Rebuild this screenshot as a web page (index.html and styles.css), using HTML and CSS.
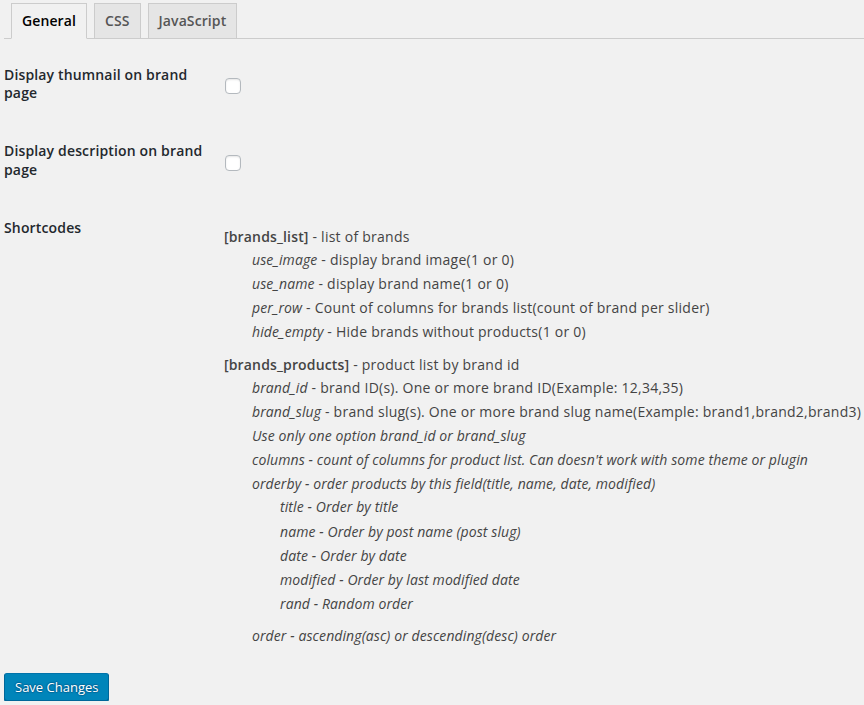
FILE: index.html
```html
<!DOCTYPE html>
<html>
<head>
<meta charset="utf-8">
<link rel="stylesheet" href="styles.css">
</head>
<body>
<div class="wrap">
  <div class="nav-tabs">
    <a class="nav-tab active">General</a>
    <a class="nav-tab">CSS</a>
    <a class="nav-tab">JavaScript</a>
  </div>
  <div class="form-table">
    <div class="row">
      <div class="th">Display thumnail on brand page</div>
      <div class="td td-check"><span class="checkbox"></span></div>
    </div>
    <div class="row">
      <div class="th">Display description on brand page</div>
      <div class="td td-check"><span class="checkbox"></span></div>
    </div>
    <div class="row">
      <div class="th">Shortcodes</div>
      <div class="td td-codes">
        <ul class="codes">
          <li class="group">
            <div class="line"><b>[brands_list]</b> - list of brands</div>
            <ul class="sub">
              <li><i>use_image</i> - display brand image(1 or 0)</li>
              <li><i>use_name</i> - display brand name(1 or 0)</li>
              <li><i>per_row</i> - Count of columns for brands list(count of brand per slider)</li>
              <li><i>hide_empty</i> - Hide brands without products(1 or 0)</li>
            </ul>
          </li>
          <li class="group">
            <div class="line"><b>[brands_products]</b> - product list by brand id</div>
            <ul class="sub">
              <li><i>brand_id</i> - brand ID(s). One or more brand ID(Example: 12,34,35)</li>
              <li><i>brand_slug</i> - brand slug(s). One or more brand slug name(Example: brand1,brand2,brand3)</li>
              <li><i>Use only one option brand_id or brand_slug</i></li>
              <li><i>columns - count of columns for product list. Can doesn't work with some theme or plugin</i></li>
              <li class="has-sub"><i>orderby - order products by this field(title, name, date, modified)</i>
                <ul class="sub sub2">
                  <li><i>title - Order by title</i></li>
                  <li><i>name - Order by post name (post slug)</i></li>
                  <li><i>date - Order by date</i></li>
                  <li><i>modified - Order by last modified date</i></li>
                  <li><i>rand - Random order</i></li>
                </ul>
              </li>
              <li><i>order - ascending(asc) or descending(desc) order</i></li>
            </ul>
          </li>
        </ul>
      </div>
    </div>
  </div>
  <div class="submit">
    <button class="button-primary" type="button">Save Changes</button>
  </div>
</div>
</body>
</html>
```
FILE: styles.css
```css
html, body {
  margin: 0;
  padding: 0;
  background: #f1f1f1;
}
body {
  font-family: "Open Sans", "Liberation Sans", sans-serif;
  font-size: 14px;
  color: #444;
  letter-spacing: 0.25px;
  overflow: hidden;
}
i {
  letter-spacing: 0.1px;
}
.wrap {
  padding: 3px 0 0 4px;
}
.nav-tabs {
  display: flex;
  border-bottom: 1px solid #ccc;
  height: 35px;
}
.nav-tab {
  margin-left: 7px;
  padding: 5px 10px;
  border: 1px solid #ccc;
  border-bottom: none;
  background: #e5e5e5;
  color: #555;
  font-size: 14px;
  font-weight: 600;
  line-height: 24px;
  letter-spacing: 0.1px;
  text-decoration: none;
  box-sizing: border-box;
  height: 35px;
}
.nav-tab.active {
  background: #f1f1f1;
  color: #000;
  border-bottom: 1px solid #f1f1f1;
  height: 36px;
}
.form-table {
  margin-top: 7px;
}
.row {
  display: flex;
}
.th {
  width: 200px;
  padding: 20px 10px 20px 0;
  line-height: 1.3;
  font-weight: 600;
  letter-spacing: 0.15px;
  color: #23282d;
  flex: none;
}
.td {
  padding: 15px 10px;
  line-height: 1.3;
}
.td-check {
  display: flex;
  align-items: center;
  padding-top: 19px;
}
.checkbox {
  display: block;
  width: 16px;
  height: 16px;
  box-sizing: border-box;
  border: 1px solid #b4b9be;
  border-radius: 4px;
  background: #fff;
  box-shadow: inset 0 1px 2px rgba(0,0,0,0.1);
  margin-left: 1px;
}
.codes, .sub {
  list-style: none;
  margin: 0;
  padding: 0;
}
.codes {
  margin-top: 11px;
  white-space: nowrap;
}
.group {
  margin-bottom: 8px;
}
.line {
  line-height: 24px;
}
.sub {
  padding-left: 28px;
}
.group > .sub {
  margin-top: -1px;
}
.sub li {
  line-height: 24.2px;
}
.group b {
  font-weight: 600;
  letter-spacing: 0.15px;
}
.sub2 li {
  line-height: 24.2px;
}
.has-sub > i {
  display: block;
  line-height: 24px;
}
.group > .sub.sub2,
.sub2 {
  margin-top: -1px;
  margin-bottom: 8px;
}
.submit {
  margin-top: 1px;
}
.button-primary {
  font-family: "Open Sans", "Liberation Sans", sans-serif;
  font-size: 13px;
  line-height: 26px;
  height: 28px;
  padding: 0 10px 1px;
  border: 1px solid;
  border-color: #0073aa #006799 #006799;
  border-radius: 3px;
  background: #0085ba;
  color: #fff;
  letter-spacing: 0;
  box-shadow: 0 1px 0 #006799;
  text-shadow: 0 -1px 1px #006799, 1px 0 1px #006799, 0 1px 1px #006799, -1px 0 1px #006799;
  cursor: pointer;
}
```
